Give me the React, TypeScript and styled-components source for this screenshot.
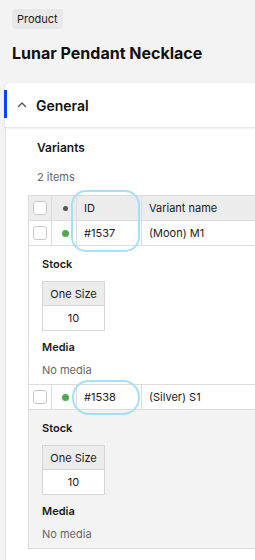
import styled, { createGlobalStyle } from "styled-components";

const GlobalStyle = createGlobalStyle`
  html, body {
    margin: 0;
    padding: 0;
    background: #f3f3f3;
    overflow: hidden;
  }
  body {
    font-family: Inter, "Noto Sans", sans-serif;
    color: #1a1a1a;
  }
`;

const Page = styled.div`
  width: 255px;
  height: 560px;
  overflow: hidden;
  padding: 9px 0 0 12px;
  box-sizing: border-box;
`;

const Badge = styled.div`
  width: fit-content;
  background: #e8e8e8;
  border-radius: 4px;
  padding: 0 5px;
  height: 20px;
  font-size: 11px;
  line-height: 20px;
  color: #222;
`;

const Title = styled.h1`
  margin: 14px 0 0;
  font-size: 16px;
  line-height: 20px;
  font-weight: 700;
  color: #111;
`;

const Card = styled.section`
  margin: 20px 0 0 -7px;
  width: 330px;
`;

const CardHeader = styled.div`
  position: relative;
  height: 44px;
  display: flex;
  align-items: center;
  gap: 9px;
  padding-left: 12px;
  background: #fff;
  border-radius: 5px 5px 0 0;
  box-shadow: 0 1px 3px rgba(0, 0, 0, 0.12);
  z-index: 1;
`;

const ActiveBar = styled.span`
  position: absolute;
  left: -1px;
  top: 7px;
  width: 3px;
  height: 28px;
  background: #0b43ff;
`;

const HeaderTitle = styled.span`
  font-size: 14px;
  font-weight: 600;
  color: #111;
`;

const CardBody = styled.div`
  background: #fff;
  border-left: 1px solid #e4e4e4;
  padding: 13px 0 20px 22px;
`;

const SectionTitle = styled.div`
  padding-left: 9px;
  font-size: 12px;
  font-weight: 600;
  line-height: 16px;
`;

const Count = styled.div`
  padding-left: 9px;
  margin-top: 14px;
  font-size: 11px;
  line-height: 15px;
  color: #666;
`;

const Table = styled.div`
  margin-top: 10px;
  border-top: 1px solid #dcdcdc;
  border-left: 1px solid #dcdcdc;
`;

const Row = styled.div<{ $head?: boolean }>`
  display: grid;
  grid-template-columns: 23px 25px 65px 1fr;
  height: 25px;
  box-sizing: border-box;
  background: ${(p) => (p.$head ? "#ececec" : "#fff")};
  border-bottom: 1px solid #dcdcdc;
`;

const Cell = styled.div<{ $center?: boolean }>`
  position: relative;
  display: flex;
  align-items: center;
  justify-content: ${(p) => (p.$center ? "center" : "flex-start")};
  padding-left: ${(p) => (p.$center ? "0" : "7px")};
  border-right: 1px solid #dcdcdc;
  font-size: 11px;
  color: #1a1a1a;
`;

const Checkbox = styled.span`
  width: 12px;
  height: 12px;
  border: 1px solid #cacaca;
  border-radius: 3px;
  background: #fff;
`;

const Dot = styled.span<{ $color: string; $size: number }>`
  width: ${(p) => p.$size}px;
  height: ${(p) => p.$size}px;
  border-radius: 50%;
  background: ${(p) => p.$color};
  margin-left: 3px;
`;

type Ring = { x: number; y: number; w: number; h: number; r: number };

const Highlight = styled.span<{ $ring: Ring }>`
  position: absolute;
  left: ${(p) => p.$ring.x}px;
  top: ${(p) => p.$ring.y}px;
  width: ${(p) => p.$ring.w}px;
  height: ${(p) => p.$ring.h}px;
  border: 2px solid #a8def6;
  border-radius: ${(p) => p.$ring.r}px;
  box-sizing: border-box;
  pointer-events: none;
  z-index: 2;
`;

const Expanded = styled.div<{ $gray?: boolean }>`
  background: ${(p) => (p.$gray ? "#f3f3f3" : "#fff")};
  border-bottom: 1px solid #dcdcdc;
  padding: 11px 0 0 13px;
  height: 139px;
  box-sizing: border-box;
`;

const SubTitle = styled.div`
  font-size: 11px;
  font-weight: 600;
  line-height: 15px;
`;

const StockTable = styled.div`
  margin: 9px 0 9px;
  width: 61px;
  border: 1px solid #d6d6d6;
`;

const StockHead = styled.div`
  height: 24px;
  box-sizing: border-box;
  display: flex;
  align-items: center;
  justify-content: center;
  background: #ececec;
  border-bottom: 1px solid #d6d6d6;
  font-size: 11px;
`;

const StockCell = styled.div`
  height: 24px;
  display: flex;
  align-items: center;
  justify-content: center;
  background: #fff;
  font-size: 11px;
`;

const Muted = styled.div`
  margin-top: 8px;
  font-size: 11px;
  line-height: 15px;
  color: #666;
`;

const Chevron = () => (
  <svg width="10" height="10" viewBox="0 0 10 10" fill="none">
    <path d="M1.5 6.5L5 3L8.5 6.5" stroke="#555" strokeWidth="1.4" strokeLinecap="round" strokeLinejoin="round" />
  </svg>
);

type Variant = { id: string; name: string; gray?: boolean; ring: Ring };

const variants: Variant[] = [
  { id: "#1537", name: "(Moon) M1", ring: { x: -6, y: -6, w: 69, h: 62, r: 15 } },
  { id: "#1538", name: "(Silver) S1", gray: true, ring: { x: -5, y: -5, w: 68, h: 35, r: 17 } },
];

function Details({ gray }: { gray?: boolean }) {
  return (
    <Expanded $gray={gray}>
      <SubTitle>Stock</SubTitle>
      <StockTable>
        <StockHead>One Size</StockHead>
        <StockCell>10</StockCell>
      </StockTable>
      <SubTitle>Media</SubTitle>
      <Muted>No media</Muted>
    </Expanded>
  );
}

export default function App() {
  return (
    <>
      <GlobalStyle />
      <Page>
        <Badge>Product</Badge>
        <Title>Lunar Pendant Necklace</Title>
        <Card>
          <CardHeader>
            <ActiveBar />
            <Chevron />
            <HeaderTitle>General</HeaderTitle>
          </CardHeader>
          <CardBody>
            <SectionTitle>Variants</SectionTitle>
            <Count>2 items</Count>
            <Table>
              <Row $head>
                <Cell $center>
                  <Checkbox />
                </Cell>
                <Cell $center>
                  <Dot $color="#555" $size={5} />
                </Cell>
                <Cell>
                  ID
                  <Highlight $ring={variants[0].ring} />
                </Cell>
                <Cell>Variant name</Cell>
              </Row>
              {variants.map((v, i) => (
                <div key={v.id}>
                  <Row>
                    <Cell $center>
                      <Checkbox />
                    </Cell>
                    <Cell $center>
                      <Dot $color="#4caa50" $size={7} />
                    </Cell>
                    <Cell>
                      {v.id}
                      {i > 0 && <Highlight $ring={v.ring} />}
                    </Cell>
                    <Cell>{v.name}</Cell>
                  </Row>
                  <Details gray={v.gray} />
                </div>
              ))}
            </Table>
          </CardBody>
        </Card>
      </Page>
    </>
  );
}
